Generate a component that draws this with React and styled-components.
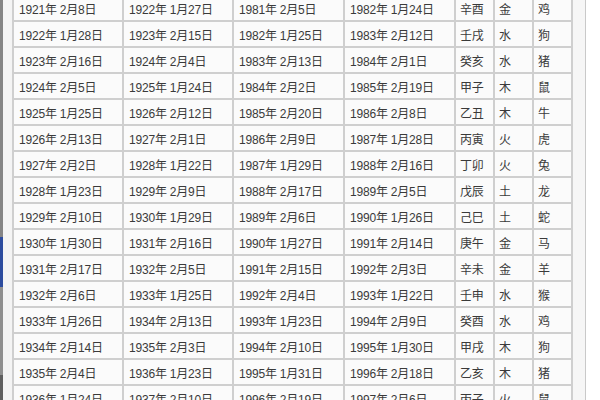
import React from "react";
import styled, { createGlobalStyle } from "styled-components";

const GlobalStyle = createGlobalStyle`
  html, body { margin: 0; padding: 0; background: #fff; }
  body { width: 600px; height: 400px; overflow: hidden; }
`;

const Page = styled.div`
  display: flex;
  width: 600px;
  height: 400px;
  overflow: hidden;
  background: #fff;
  font-family: "Liberation Sans", "Noto Sans CJK SC", sans-serif;
`;

const Edge = styled.div`
  width: 3px;
  flex: none;
  display: flex;
  flex-direction: column;
`;

const Segment = styled.div`
  height: ${(p) => p.$h}px;
  flex: ${(p) => (p.$h ? "none" : "1")};
  background: ${(p) => p.$color};
`;

const Gutter = styled.div`
  width: 9px;
  flex: none;
  background: #f4f4f4;
`;

const Table = styled.table`
  flex: none;
  margin-top: -6px;
  align-self: flex-start;
  border-collapse: separate;
  border-spacing: 2px;
  background: #cfcfcf;
  table-layout: fixed;
  color: #3a3a3a;
  font-size: 12px;
`;

const Cell = styled.td`
  width: ${(p) => p.$w}px;
  height: 24px;
  padding: 0 0 0 ${(p) => (p.$w > 60 ? 5 : 4)}px;
  box-sizing: border-box;
  background: #fbfbfb;
  white-space: nowrap;
  overflow: hidden;
  vertical-align: middle;
  letter-spacing: -0.2px;
`;

const RightPane = styled.div`
  width: 12px;
  flex: none;
  background: #f6f6f6;
  border-right: 1px solid #c9c9c9;
`;

const Rest = styled.div`
  flex: 1;
  background: #fff;
`;

const widths = [108, 108, 109, 109, 37, 37, 37];

const rows = [
  ["1921年 2月8日", "1922年 1月27日", "1981年 2月5日", "1982年 1月24日", "辛酉", "金", "鸡"],
  ["1922年 1月28日", "1923年 2月15日", "1982年 1月25日", "1983年 2月12日", "壬戌", "水", "狗"],
  ["1923年 2月16日", "1924年 2月4日", "1983年 2月13日", "1984年 2月1日", "癸亥", "水", "猪"],
  ["1924年 2月5日", "1925年 1月24日", "1984年 2月2日", "1985年 2月19日", "甲子", "木", "鼠"],
  ["1925年 1月25日", "1926年 2月12日", "1985年 2月20日", "1986年 2月8日", "乙丑", "木", "牛"],
  ["1926年 2月13日", "1927年 2月1日", "1986年 2月9日", "1987年 1月28日", "丙寅", "火", "虎"],
  ["1927年 2月2日", "1928年 1月22日", "1987年 1月29日", "1988年 2月16日", "丁卯", "火", "兔"],
  ["1928年 1月23日", "1929年 2月9日", "1988年 2月17日", "1989年 2月5日", "戊辰", "土", "龙"],
  ["1929年 2月10日", "1930年 1月29日", "1989年 2月6日", "1990年 1月26日", "己巳", "土", "蛇"],
  ["1930年 1月30日", "1931年 2月16日", "1990年 1月27日", "1991年 2月14日", "庚午", "金", "马"],
  ["1931年 2月17日", "1932年 2月5日", "1991年 2月15日", "1992年 2月3日", "辛未", "金", "羊"],
  ["1932年 2月6日", "1933年 1月25日", "1992年 2月4日", "1993年 1月22日", "壬申", "水", "猴"],
  ["1933年 1月26日", "1934年 2月13日", "1993年 1月23日", "1994年 2月9日", "癸酉", "水", "鸡"],
  ["1934年 2月14日", "1935年 2月3日", "1994年 2月10日", "1995年 1月30日", "甲戌", "木", "狗"],
  ["1935年 2月4日", "1936年 1月23日", "1995年 1月31日", "1996年 2月18日", "乙亥", "木", "猪"],
  ["1936年 1月24日", "1937年 2月10日", "1996年 2月19日", "1997年 2月6日", "丙子", "火", "鼠"],
];

export default function App() {
  return (
    <>
      <GlobalStyle />
      <Page>
        <Edge>
          <Segment $h={237} $color="#858585" />
          <Segment $h={50} $color="#2d4c9e" />
          <Segment $h={88} $color="#8f8f8f" />
          <Segment $color="#5f5f5f" />
        </Edge>
        <Gutter />
        <Table>
          <tbody>
            {rows.map((r, i) => (
              <tr key={i}>
                {r.map((c, j) => (
                  <Cell key={j} $w={widths[j]}>
                    {c}
                  </Cell>
                ))}
              </tr>
            ))}
          </tbody>
        </Table>
        <RightPane />
        <Rest />
      </Page>
    </>
  );
}
